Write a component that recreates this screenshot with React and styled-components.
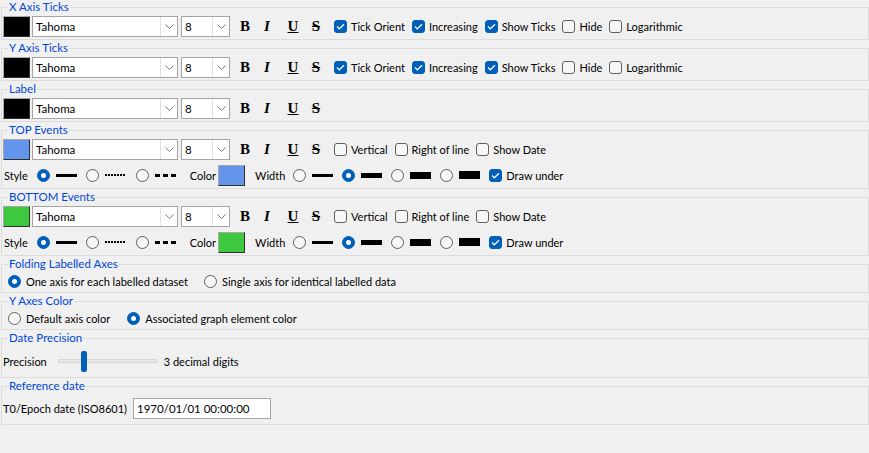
import React from "react";
import styled, { createGlobalStyle } from "styled-components";

const GlobalStyle = createGlobalStyle`
  html, body {
    margin: 0;
    padding: 0;
    background: #f0f0f0;
  }
  body {
    font-family: Lato, "Noto Sans", sans-serif;
    font-size: 11px;
    color: #000;
  }
`;

const ACCENT = "#005fb8";

const Page = styled.div`
  width: 869px;
  height: 453px;
  overflow: hidden;
  display: flex;
  flex-direction: column;
  gap: 1px;
  background: #f0f0f0;
`;

const Group = styled.fieldset`
  margin: 0 0 0 1px;
  padding: 2px 1px 2px 1px;
  border: 1px solid #dcdcdc;
  min-width: 0;
  display: flex;
  flex-direction: column;
  gap: 4px;
`;

const Legend = styled.legend`
  padding: 0 1px;
  margin-left: 5px;
  color: #0046d5;
  line-height: 14px;
  font-size: 11.5px;
`;

const Row = styled.div`
  display: flex;
  align-items: center;
  height: ${(p) => p.$h ?? 21}px;
  white-space: nowrap;
`;

const Swatch = styled.div`
  box-sizing: border-box;
  width: 27px;
  height: 21px;
  margin-left: ${(p) => p.$ml ?? 0}px;
  background: ${(p) => p.$color};
  border: 1px solid;
  border-color: #a8a8a8 #303030 #303030 #a8a8a8;
`;

const Combo = styled.div`
  box-sizing: border-box;
  width: ${(p) => p.$w}px;
  height: 21px;
  margin-left: ${(p) => p.$ml}px;
  display: flex;
  align-items: center;
  background: #fff;
  border: 1px solid #a5a5a5;
  font-size: 11.5px;
`;

const ComboText = styled.span`
  flex: 1;
  padding-left: 3px;
`;

const ComboArrow = styled.div`
  box-sizing: border-box;
  width: 17px;
  height: 19px;
  display: flex;
  align-items: center;
  justify-content: center;
  border-left: 1px solid #e1e1e1;
`;

const FormatBtn = styled.span`
  width: 16px;
  margin-left: ${(p) => p.$ml}px;
  text-align: center;
  font-family: "Liberation Serif", serif;
  font-size: 15px;
  line-height: 15px;
  font-weight: bold;
  font-style: ${(p) => (p.$italic ? "italic" : "normal")};
  text-decoration: ${(p) => p.$deco ?? "none"};
  text-decoration-thickness: 1px;
`;

const CheckWrap = styled.label`
  display: flex;
  align-items: center;
  gap: 4px;
  margin-left: ${(p) => p.$ml ?? 7}px;
`;

const Box = styled.span`
  box-sizing: border-box;
  width: 13px;
  height: 13px;
  border-radius: 3px;
  display: flex;
  align-items: center;
  justify-content: center;
  background: ${(p) => (p.$on ? ACCENT : "#f7f7f7")};
  border: 1px solid ${(p) => (p.$on ? ACCENT : "#5f5f5f")};
`;

const Dot = styled.span`
  box-sizing: border-box;
  width: 13px;
  height: 13px;
  margin-left: ${(p) => p.$ml ?? 0}px;
  border-radius: 50%;
  flex: none;
  display: flex;
  align-items: center;
  justify-content: center;
  background: ${(p) => (p.$on ? ACCENT : "#f7f7f7")};
  border: 1px solid ${(p) => (p.$on ? ACCENT : "#5f5f5f")};

  &::after {
    content: "";
    display: ${(p) => (p.$on ? "block" : "none")};
    width: 5px;
    height: 5px;
    border-radius: 50%;
    background: #fff;
  }
`;

const LineSample = styled.span`
  width: 21px;
  height: ${(p) => p.$t}px;
  margin-left: 6px;
  background: ${(p) =>
    p.$kind === "dot"
      ? "repeating-linear-gradient(to right, #000 0 2px, transparent 2px 3px)"
      : p.$kind === "dash"
      ? "repeating-linear-gradient(to right, #000 0 5px, transparent 5px 8px)"
      : "#000"};
`;

const Text = styled.span`
  margin-left: ${(p) => p.$ml ?? 0}px;
`;

const RadioWrap = styled.label`
  display: flex;
  align-items: center;
  gap: 5px;
  margin-left: ${(p) => p.$ml}px;
`;

const Slider = styled.div`
  position: relative;
  width: 99px;
  height: 21px;
  margin-left: 11px;
  display: flex;
  align-items: center;
`;

const Track = styled.div`
  box-sizing: border-box;
  width: 100%;
  height: 4px;
  background: #e7e7e7;
  border: 1px solid #d6d6d6;
`;

const Thumb = styled.div`
  position: absolute;
  top: 0;
  width: 6px;
  height: 21px;
  border-radius: 2px;
  background: ${ACCENT};
`;

const Input = styled.div`
  box-sizing: border-box;
  width: 138px;
  height: 21px;
  margin-left: 6px;
  padding-left: 3px;
  display: flex;
  align-items: center;
  background: #fff;
  border: 1px solid #a5a5a5;
  font-size: 11.5px;
`;

const Chevron = () => (
  <svg width="9" height="5" viewBox="0 0 9 5">
    <polyline points="0.5,0.5 4.5,4.5 8.5,0.5" fill="none" stroke="#7a7a7a" strokeWidth="1" />
  </svg>
);

const Tick = () => (
  <svg width="9" height="7" viewBox="0 0 9 7">
    <polyline points="1,3.5 3.3,5.8 8,1.2" fill="none" stroke="#fff" strokeWidth="1.2" />
  </svg>
);

const Check = ({ on, ml, children }) => (
  <CheckWrap $ml={ml}>
    <Box $on={on}>{on && <Tick />}</Box>
    {children}
  </CheckWrap>
);

const Radio = ({ on, ml, children }) => (
  <RadioWrap $ml={ml}>
    <Dot $on={on} />
    {children}
  </RadioWrap>
);

const FontRow = ({ color, children }) => (
  <Row>
    <Swatch $color={color} />
    <Combo $w={146} $ml={2}>
      <ComboText>Tahoma</ComboText>
      <ComboArrow>
        <Chevron />
      </ComboArrow>
    </Combo>
    <Combo $w={49} $ml={3}>
      <ComboText>8</ComboText>
      <ComboArrow>
        <Chevron />
      </ComboArrow>
    </Combo>
    <FormatBtn $ml={7}>B</FormatBtn>
    <FormatBtn $ml={6} $italic>I</FormatBtn>
    <FormatBtn $ml={10} $deco="underline">U</FormatBtn>
    <FormatBtn $ml={7} $deco="line-through">S</FormatBtn>
    {children}
  </Row>
);

const AxisChecks = () => (
  <>
    <Check on ml={10}>Tick Orient</Check>
    <Check on>Increasing</Check>
    <Check on>Show Ticks</Check>
    <Check>Hide</Check>
    <Check>Logarithmic</Check>
  </>
);

const EventsGroup = ({ title, color }) => (
  <Group>
    <Legend>{title}</Legend>
    <FontRow color={color}>
      <Check ml={10}>Vertical</Check>
      <Check>Right of line</Check>
      <Check>Show Date</Check>
    </FontRow>
    <Row $h={22}>
      <Text $ml={1}>Style</Text>
      <Dot $on $ml={9} />
      <LineSample $t={3} />
      <Dot $ml={9} />
      <LineSample $t={2} $kind="dot" />
      <Dot $ml={10} />
      <LineSample $t={3} $kind="dash" />
      <Text $ml={14}>Color</Text>
      <Swatch $color={color} $ml={2} />
      <Text $ml={10}>Width</Text>
      <Dot $ml={8} />
      <LineSample $t={3} />
      <Dot $on $ml={9} />
      <LineSample $t={5} />
      <Dot $ml={9} />
      <LineSample $t={7} />
      <Dot $ml={9} />
      <LineSample $t={8} />
      <Check on ml={9}>Draw under</Check>
    </Row>
  </Group>
);

export default function App() {
  return (
    <Page>
      <GlobalStyle />
      <Group>
        <Legend>X Axis Ticks</Legend>
        <FontRow color="#000">
          <AxisChecks />
        </FontRow>
      </Group>
      <Group>
        <Legend>Y Axis Ticks</Legend>
        <FontRow color="#000">
          <AxisChecks />
        </FontRow>
      </Group>
      <Group>
        <Legend>Label</Legend>
        <FontRow color="#000" />
      </Group>
      <EventsGroup title="TOP Events" color="#6495ed" />
      <EventsGroup title="BOTTOM Events" color="#3ec83e" />
      <Group>
        <Legend>Folding Labelled Axes</Legend>
        <Row $h={17}>
          <Radio on ml={5}>One axis for each labelled dataset</Radio>
          <Radio ml={16}>Single axis for identical labelled data</Radio>
        </Row>
      </Group>
      <Group>
        <Legend>Y Axes Color</Legend>
        <Row $h={17}>
          <Radio ml={5}>Default axis color</Radio>
          <Radio on ml={17}>Associated graph element color</Radio>
        </Row>
      </Group>
      <Group>
        <Legend>Date Precision</Legend>
        <Row $h={28}>
          <Text>Precision</Text>
          <Slider>
            <Track />
            <Thumb style={{ left: 23 }} />
          </Slider>
          <Text $ml={7}>3 decimal digits</Text>
        </Row>
      </Group>
      <Group>
        <Legend>Reference date</Legend>
        <Row $h={27}>
          <Text>T0/Epoch date (ISO8601)</Text>
          <Input>1970/01/01 00:00:00</Input>
        </Row>
      </Group>
    </Page>
  );
}
